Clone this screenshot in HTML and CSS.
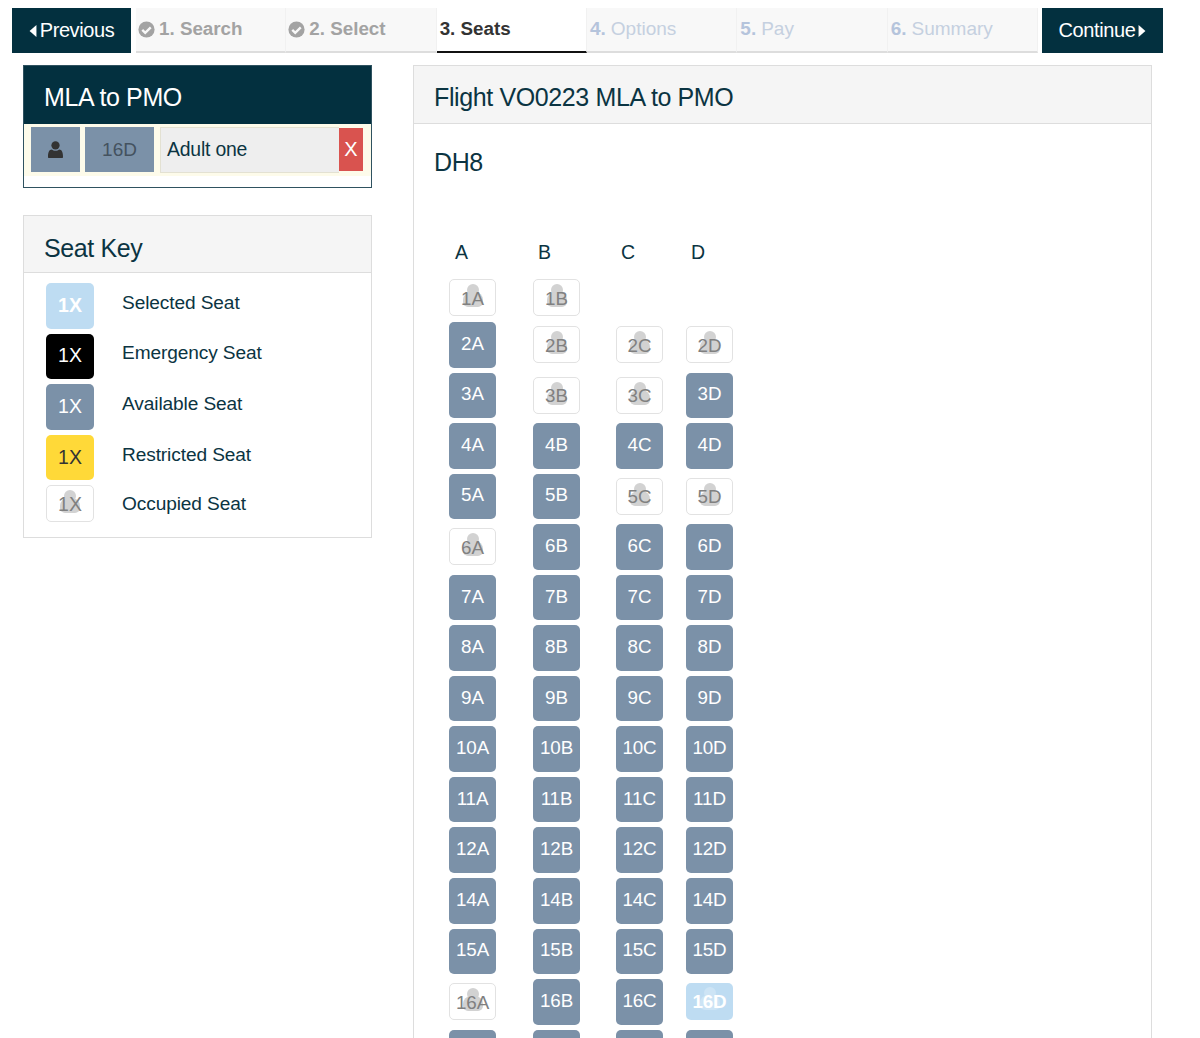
FILE: index.html
```html
<!DOCTYPE html>
<html lang="en">
<head>
<meta charset="utf-8">
<title>Seats</title>
<link rel="stylesheet" href="styles.css">
</head>
<body>
<nav class="nav">
  <a class="nav-btn prev"><svg class="caret" viewBox="0 0 8 14"><path d="M8 0v14L0 7z"/></svg>Previous</a>
  <div class="steps">
    <div class="step done"><svg class="check" viewBox="0 0 20 20"><circle cx="10" cy="10" r="9.5"/><path d="M5 10.500l3.500 3.500L15 7.500" fill="none" stroke="#f8f8f8" stroke-width="2.800"/></svg><b>1. Search</b></div>
    <div class="step done"><svg class="check" viewBox="0 0 20 20"><circle cx="10" cy="10" r="9.5"/><path d="M5 10.500l3.500 3.500L15 7.500" fill="none" stroke="#f8f8f8" stroke-width="2.800"/></svg><b>2. Select</b></div>
    <div class="step active"><b>3. Seats</b></div>
    <div class="step todo"><b>4.</b> Options</div>
    <div class="step todo"><b>5.</b> Pay</div>
    <div class="step todo"><b>6.</b> Summary</div>
  </div>
  <a class="nav-btn next">Continue<svg class="caret" viewBox="0 0 8 14"><path d="M0 0v14l8-7z"/></svg></a>
</nav>
<main class="main">
  <aside class="side">
    <section class="panel route">
      <h2 class="panel-title route-title">MLA to PMO</h2>
      <div class="pax">
        <span class="pax-icon"><svg viewBox="0 0 16 18"><circle cx="8" cy="4.600" r="4.400"/><path d="M1 18c-.8 0-1-.6-1-1.400C0 12 1.400 9 4 9c1 .9 2.400 1.400 4 1.400S11 9.900 12 9c2.600 0 4 3 4 7.600 0 .8-.2 1.400-1 1.400z"/></svg></span>
        <span class="pax-seat">16D</span>
        <span class="pax-name">Adult one</span>
        <span class="pax-x">X</span>
      </div>
    </section>
    <section class="panel key">
      <h2 class="panel-title">Seat Key</h2>
      <ul class="key-list">
        <li class="key-row"><span class="seat sel">1X</span><span class="key-label">Selected Seat</span></li>
        <li class="key-row"><span class="seat emg">1X</span><span class="key-label">Emergency Seat</span></li>
        <li class="key-row"><span class="seat av">1X</span><span class="key-label">Available Seat</span></li>
        <li class="key-row"><span class="seat res">1X</span><span class="key-label">Restricted Seat</span></li>
        <li class="key-row"><span class="seat occ">1X</span><span class="key-label">Occupied Seat</span></li>
      </ul>
    </section>
  </aside>
  <section class="panel flight">
    <h2 class="panel-title">Flight VO0223 MLA to PMO</h2>
    <div class="flight-body">
      <h3 class="plane">DH8</h3>
      <div class="cols"><span>A</span><span>B</span><span>C</span><span>D</span></div>
      <div class="map">
        <span class="seat occ">1A</span><span class="seat occ">1B</span><span></span><span></span>
        <span class="seat av">2A</span><span class="seat occ">2B</span><span class="seat occ">2C</span><span class="seat occ">2D</span>
        <span class="seat av">3A</span><span class="seat occ">3B</span><span class="seat occ">3C</span><span class="seat av">3D</span>
        <span class="seat av">4A</span><span class="seat av">4B</span><span class="seat av">4C</span><span class="seat av">4D</span>
        <span class="seat av">5A</span><span class="seat av">5B</span><span class="seat occ">5C</span><span class="seat occ">5D</span>
        <span class="seat occ">6A</span><span class="seat av">6B</span><span class="seat av">6C</span><span class="seat av">6D</span>
        <span class="seat av">7A</span><span class="seat av">7B</span><span class="seat av">7C</span><span class="seat av">7D</span>
        <span class="seat av">8A</span><span class="seat av">8B</span><span class="seat av">8C</span><span class="seat av">8D</span>
        <span class="seat av">9A</span><span class="seat av">9B</span><span class="seat av">9C</span><span class="seat av">9D</span>
        <span class="seat av">10A</span><span class="seat av">10B</span><span class="seat av">10C</span><span class="seat av">10D</span>
        <span class="seat av">11A</span><span class="seat av">11B</span><span class="seat av">11C</span><span class="seat av">11D</span>
        <span class="seat av">12A</span><span class="seat av">12B</span><span class="seat av">12C</span><span class="seat av">12D</span>
        <span class="seat av">14A</span><span class="seat av">14B</span><span class="seat av">14C</span><span class="seat av">14D</span>
        <span class="seat av">15A</span><span class="seat av">15B</span><span class="seat av">15C</span><span class="seat av">15D</span>
        <span class="seat occ">16A</span><span class="seat av">16B</span><span class="seat av">16C</span><span class="seat sel">16D</span>
        <span class="seat av">17A</span><span class="seat av">17B</span><span class="seat av">17C</span><span class="seat av">17D</span>
      </div>
    </div>
  </section>
</main>
</body>
</html>
```
FILE: styles.css
```css
* { box-sizing: border-box; }
html, body { height: 1038px; overflow: hidden; }
body { margin: 0; background: #fff; color: #0b3442; font-family: "Liberation Sans", Arial, sans-serif; font-size: 20px; }

.nav { display: flex; align-items: flex-start; margin: 8px 0 0 12px; width: 1151px; height: 45px; }
.nav-btn { display: flex; align-items: center; justify-content: center; gap: 3px; width: 119px; height: 45px; background: #03303f; color: #fff; letter-spacing: -.4px; }
.next { width: 121px; margin-left: 4px; }
.caret { width: 8px; height: 12px; fill: #fff; }
.steps { display: grid; grid-template-columns: repeat(6, 1fr); flex: 1; margin-left: 5px; height: 45px; }
.step { display: flex; align-items: center; gap: 4px; padding: 0 3px 1px; background: #f8f8f8; border-bottom: 2px solid #ddd; border-right: 1px solid #f1f1f1; }
.step.done { color: #a3a3a3; gap: 4px; padding-left: 2px; }
.step.active { background: #fff; color: #333; border-bottom-color: #111; }
.step.todo { color: #c5d0e0; gap: 5px; font-size: 19px; }
.step.todo b { color: #b5c4dc; }
.step.active b, .step.done b { font-size: 18.8px; }
.check { width: 17px; height: 17px; fill: #a3a3a3; flex: none; }

.main { display: flex; align-items: flex-start; gap: 41px; margin: 12px 0 0 23px; }
.side { width: 349px; flex: none; display: flex; flex-direction: column; gap: 27px; }
.panel { border: 1px solid #ddd; background: #fff; }
.panel-title { margin: 0; height: 58px; padding: 6px 20px 0; display: flex; align-items: center; background: #f5f5f5; border-bottom: 1px solid #ddd; font-size: 25px; font-weight: 400; letter-spacing: -.38px; }

.route { border-color: #2f5260; height: 123px; }
.route-title { background: #03303f; color: #fff; border: 0; padding-top: 5px; }
.pax { display: flex; align-items: flex-start; gap: 5px; padding: 3px 8px 3px 7px; height: 52px; background: #fdfbea; }
.pax-icon, .pax-seat { display: flex; align-items: center; justify-content: center; height: 45px; background: #7b91a8; color: #44525f; font-size: 19px; }
.pax-icon { width: 49px; }
.pax-icon svg { width: 15px; height: 17px; fill: #333; }
.pax-seat { width: 69px; }
.pax-name { flex: 1; display: flex; align-items: center; height: 46px; margin-left: 1px; padding: 0 0 2px 6px; background: #eee; border: 1px solid #e3e1d2; border-right: 0; font-size: 19.4px; letter-spacing: -.2px; }
.pax-x { display: flex; align-items: center; justify-content: center; width: 24px; height: 43px; margin: 1px 0 0 -5px; background: #d9534f; color: #fff; position: relative; }

.key { height: 323px; }
.key .panel-title { height: 57px; padding-top: 9px; }
.key-list { list-style: none; margin: 0; padding: 10px 0 0 22px; }
.key-row { display: flex; align-items: center; height: 45.6px; margin-bottom: 5px; }
.key-row .seat { flex: none; width: 48px; margin-right: 28px; font-size: 19.5px; padding-bottom: 1px; }
.key-label { margin-top: -6px; font-size: 19.1px; letter-spacing: -.1px; }
.key-row:last-child, .key-row:last-child .seat { height: 37px; }
.key-row:last-child { margin-top: 2px; }
.key-row:last-child .key-label { margin-top: 1px; }

.flight { width: 739px; height: 980px; border-bottom: 0; }
.flight-body { padding: 0 0 0 20px; }
.plane { margin: 0; padding-top: 25px; height: 117px; font-size: 25px; font-weight: 400; letter-spacing: -.38px; line-height: 26px; }
.cols { display: grid; grid-template-columns: 83px 83px 70px 47px; margin-left: 21px; height: 37px; line-height: 23px; font-size: 19.5px; }
.map { display: grid; grid-template-columns: 84px 83px 70px 47px; grid-template-rows: 39px; row-gap: 5px; margin-left: 15px; align-items: center; font-size: 18.8px; letter-spacing: -.1px; }

.seat { position: relative; z-index: 0; display: flex; align-items: center; justify-content: center; width: 47px; height: 45.55px; border-radius: 5px; padding-bottom: 2px; }
.av { background: #7b91a8; color: #fff; }
.emg { background: #000; color: #fff; }
.res { background: #ffd938; color: #333; }
.sel, .occ { height: 37px; padding-bottom: 0; }
.sel { background: #bedcf2; color: #fff; font-weight: 700; }
.key-row .sel { height: 45.6px; padding-bottom: 0; }
.occ { background: #fff; border: 1px solid #e2e2e2; color: #808080; padding-top: 2px; }
.occ::before, .occ::after, .map .sel::before, .map .sel::after { content: ""; position: absolute; z-index: -1; background: #d2d2d2; }
.occ::before, .map .sel::before { top: 4px; left: 50%; width: 12px; height: 12px; margin-left: -6px; border-radius: 50%; }
.occ::after, .map .sel::after { top: 12px; left: 50%; width: 20px; height: 15px; margin-left: -10px; border-radius: 8px 8px 5px 5px; }
.map .sel::before, .map .sel::after { background: #cde4f5; }
```
